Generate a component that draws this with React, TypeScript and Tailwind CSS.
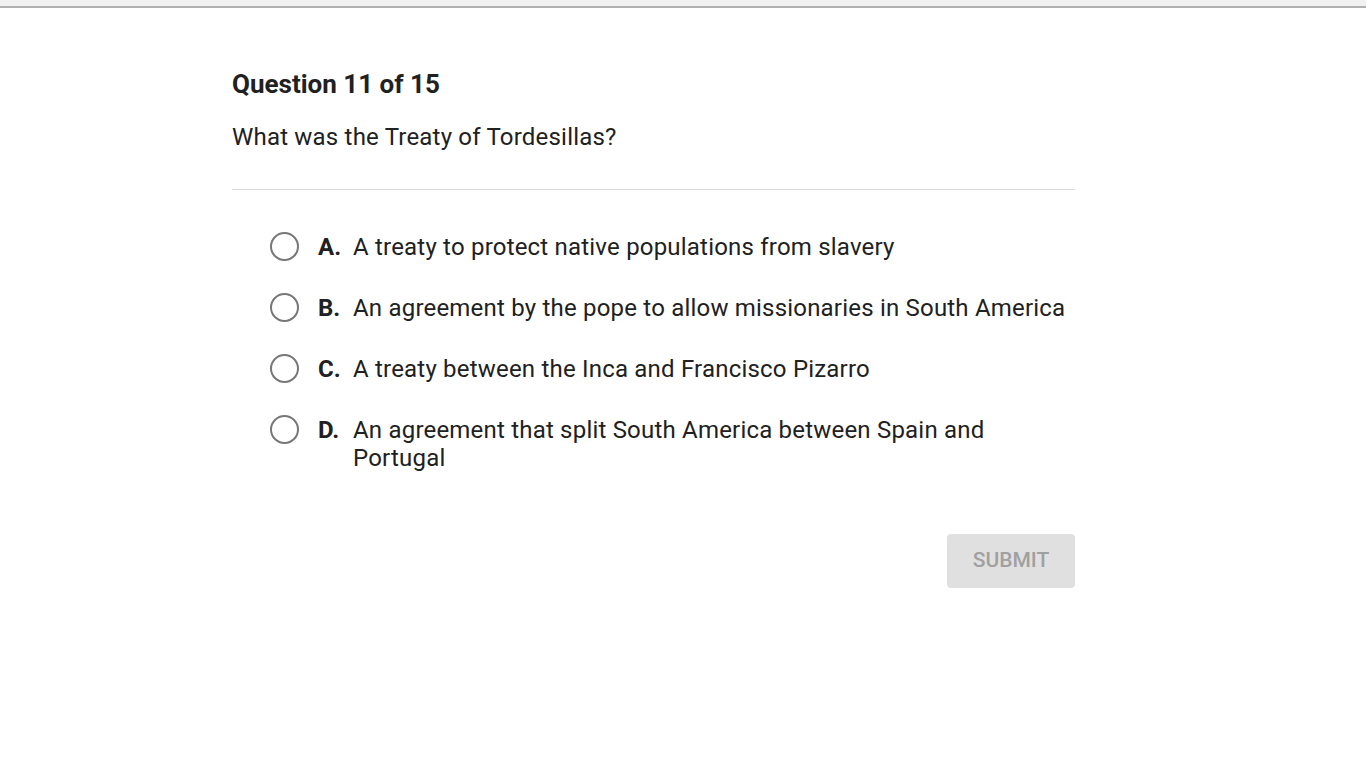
import React from "react";

const options = [
  { l: "A.", t: "A treaty to protect native populations from slavery" },
  { l: "B.", t: "An agreement by the pope to allow missionaries in South America" },
  { l: "C.", t: "A treaty between the Inca and Francisco Pizarro" },
  { l: "D.", t: "An agreement that split South America between Spain and Portugal" },
];

export default function App() {
  return (
    <div className="min-h-[768px] bg-white text-[#212121]" style={{ fontFamily: "Roboto, 'Noto Sans', sans-serif" }}>
      <div className="h-[6px] bg-[#f1f1f1] border-b-[2px] border-[#b0b0b0] box-content" />
      <div className="w-[843px] ml-[232px] pt-[61px]">
        <h1 className="text-[26px] font-bold leading-[30px]">Question 11 of 15</h1>
        <p className="mt-[24px] text-[24px] leading-[28px] tracking-[0.2px]">What was the Treaty of Tordesillas?</p>
        <div className="mt-[38px] h-px bg-[#dcdcdc]" />
        <div className="pl-[38px] pt-[43px] flex flex-col gap-[33px]">
          {options.map((o) => (
            <div key={o.l} className="flex items-start">
              <div className="w-[29px] h-[29px] rounded-full border-[2px] border-[#777] shrink-0 mt-[-1px]" />
              <div className="ml-[19px] w-[35px] shrink-0 text-[24px] leading-[28px] font-bold">{o.l}</div>
              <div className="text-[24px] leading-[28px] tracking-[0.2px]">{o.t}</div>
            </div>
          ))}
        </div>
        <div className="flex justify-end mt-[62px]">
          <button className="w-[128px] h-[54px] rounded-[4px] bg-[#e0e0e0] text-[#a0a0a0] text-[21px] font-medium">SUBMIT</button>
        </div>
      </div>
    </div>
  );
}
